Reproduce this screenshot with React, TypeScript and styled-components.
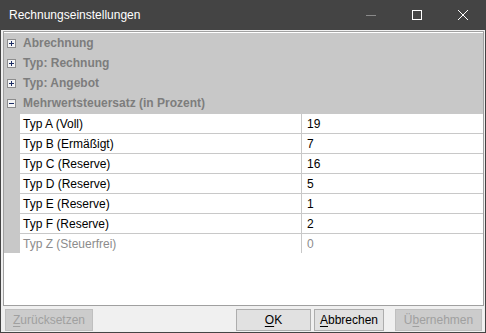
import { ReactElement } from 'react'
import styled, { createGlobalStyle } from 'styled-components'

const GlobalStyle = createGlobalStyle`
  html, body {
    margin: 0;
    padding: 0;
    background: #ffffff;
  }
  * {
    box-sizing: border-box;
  }
`

const Window = styled.div`
  width: 486px;
  height: 333px;
  display: flex;
  flex-direction: column;
  background-color: #f0f0f0;
  border: 1px solid #444444;
  border-top: none;
  font-family: "Liberation Sans", Arial, sans-serif;
  font-size: 12px;
  color: #000000;
  overflow: hidden;
`

const TitleBar = styled.div`
  height: 30px;
  flex: none;
  display: flex;
  align-items: center;
  background-color: #444444;
  color: #ffffff;
  margin: 0 -1px;
`

const Title = styled.div`
  flex: 1;
  padding-left: 9px;
  font-size: 12px;
`

const Controls = styled.div`
  display: flex;
  height: 100%;
`

const ControlButton = styled.div<{ disabled?: boolean }>`
  width: 46px;
  height: 100%;
  display: flex;
  align-items: center;
  justify-content: center;
  color: ${({ disabled }) => (disabled ? '#8a8a8a' : '#ffffff')};
`

const Body = styled.div`
  flex: 1;
  display: flex;
  flex-direction: column;
  padding: 1px 1px 0 2px;
`

const Grid = styled.div`
  height: 275px;
  flex: none;
  border: 1px solid #a0a0a0;
  background-color: #ffffff;
  overflow: hidden;
  display: flex;
  flex-direction: column;
`

const InnerTop = styled.div`
  height: 1px;
  background: #ffffff;
`

const CategoryRow = styled.div`
  height: 20px;
  display: flex;
  align-items: center;
  background-color: #c8c8c8;
  color: #7d7d7d;
  font-weight: bold;
`

const ExpandBox = styled.span`
  width: 9px;
  height: 9px;
  margin: 0 7px 0 3px;
  flex: none;
  border: 1px solid #8d8d8d;
  background: #f4f4f4;
  position: relative;
  &::before {
    content: '';
    position: absolute;
    left: 1px;
    top: 3px;
    width: 5px;
    height: 1px;
    background: #1e2f66;
  }
`

const PlusBox = styled(ExpandBox)`
  &::after {
    content: '';
    position: absolute;
    left: 3px;
    top: 1px;
    width: 1px;
    height: 5px;
    background: #1e2f66;
  }
`

const PropertyRow = styled.div<{ readOnly?: boolean }>`
  height: 20px;
  display: flex;
  color: ${({ readOnly }) => (readOnly ? '#8c8c8c' : '#000000')};
`

const Gutter = styled.div`
  width: 16px;
  flex: none;
  background-color: #c8c8c8;
`

const NameCell = styled.div`
  width: 282px;
  flex: none;
  display: flex;
  align-items: center;
  padding-left: 3px;
  border-top: 1px solid #c8c8c8;
  border-right: 1px solid #c8c8c8;
  white-space: nowrap;
`

const ValueCell = styled.div`
  flex: 1;
  display: flex;
  align-items: center;
  padding-left: 5px;
  border-top: 1px solid #c8c8c8;
`

const Footer = styled.div`
  flex: 1;
  display: flex;
  align-items: center;
  padding: 1px 2px 0 2px;
`

const Spacer = styled.div`
  flex: 1;
`

const Button = styled.div<{ disabled?: boolean; width: number; gap?: number }>`
  width: ${({ width }) => width}px;
  height: 22px;
  margin-left: ${({ gap }) => gap ?? 0}px;
  display: flex;
  align-items: center;
  justify-content: center;
  border: 1px solid ${({ disabled }) => (disabled ? '#bfbfbf' : '#adadad')};
  background-color: ${({ disabled }) => (disabled ? '#cccccc' : '#e1e1e1')};
  color: ${({ disabled }) => (disabled ? '#a0a0a0' : '#000000')};
  u {
    text-decoration-thickness: 1px;
    text-underline-offset: 2px;
  }
`

const categories = ['Abrechnung', 'Typ: Rechnung', 'Typ: Angebot']

const rates = [
  { name: 'Typ A (Voll)', value: '19' },
  { name: 'Typ B (Ermäßigt)', value: '7' },
  { name: 'Typ C (Reserve)', value: '16' },
  { name: 'Typ D (Reserve)', value: '5' },
  { name: 'Typ E (Reserve)', value: '1' },
  { name: 'Typ F (Reserve)', value: '2' },
  { name: 'Typ Z (Steuerfrei)', value: '0', readOnly: true }
]

export default function App (): ReactElement {
  return (
    <>
      <GlobalStyle />
      <Window>
        <TitleBar>
          <Title>Rechnungseinstellungen</Title>
          <Controls>
            <ControlButton disabled>
              <svg width="10" height="10" viewBox="0 0 10 10">
                <path d="M0 5.5h10" stroke="currentColor" strokeWidth="1" />
              </svg>
            </ControlButton>
            <ControlButton>
              <svg width="10" height="10" viewBox="0 0 10 10">
                <rect x="0.5" y="0.5" width="9" height="9" fill="none" stroke="currentColor" strokeWidth="1" />
              </svg>
            </ControlButton>
            <ControlButton>
              <svg width="10" height="10" viewBox="0 0 10 10">
                <path d="M0 0L10 10M10 0L0 10" stroke="currentColor" strokeWidth="1" />
              </svg>
            </ControlButton>
          </Controls>
        </TitleBar>
        <Body>
          <Grid>
            <InnerTop />
            {categories.map((c) => (
              <CategoryRow key={c}>
                <PlusBox />
                {c}
              </CategoryRow>
            ))}
            <CategoryRow>
              <ExpandBox />
              Mehrwertsteuersatz (in Prozent)
            </CategoryRow>
            {rates.map((r) => (
              <PropertyRow key={r.name} readOnly={r.readOnly}>
                <Gutter />
                <NameCell>{r.name}</NameCell>
                <ValueCell>{r.value}</ValueCell>
              </PropertyRow>
            ))}
          </Grid>
          <Footer>
            <Button disabled width={88}><span><u>Z</u>urücksetzen</span></Button>
            <Spacer />
            <Button width={75}><span><u>O</u>K</span></Button>
            <Button width={70} gap={3}><span><u>A</u>bbrechen</span></Button>
            <Button disabled width={87} gap={11}><span>Ü<u>b</u>ernehmen</span></Button>
          </Footer>
        </Body>
      </Window>
    </>
  )
}
